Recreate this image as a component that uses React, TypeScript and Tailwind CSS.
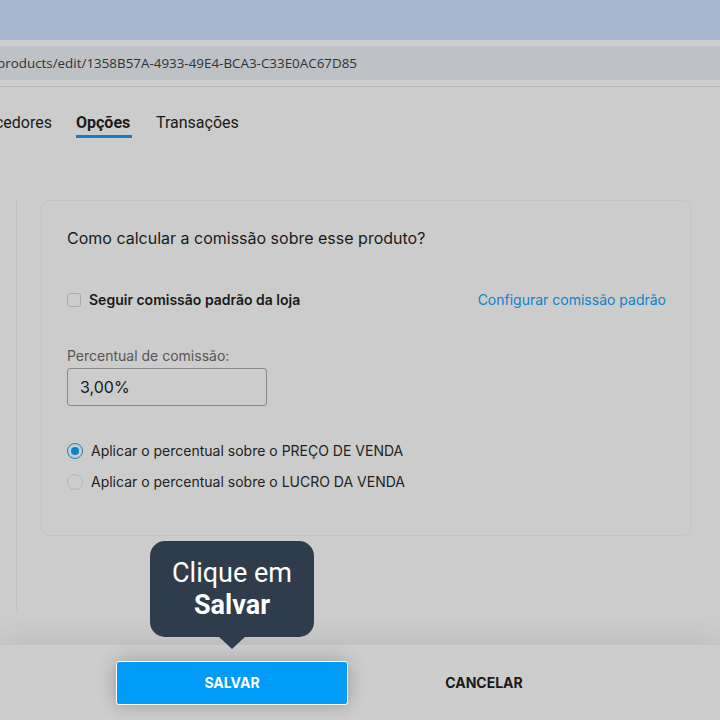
const FONT = { fontFamily: "Inter, 'Noto Sans', sans-serif" }

export default function App() {
  return (
    <div className="relative flex h-[720px] w-[720px] flex-col overflow-hidden bg-[#cccccc]" style={FONT}>
      {/* Browser chrome */}
      <div className="h-[40px] shrink-0 bg-[#a6b6cc]" />
      <div className="h-[6px] shrink-0 bg-[#cecece]" />
      <div
        className="flex h-[34px] shrink-0 items-center overflow-hidden bg-[#bec1c6] text-[13.4px] text-[#333]"
        style={{ fontFamily: "'Open Sans', 'Noto Sans', sans-serif" }}
      >
        <span className="-ml-[3px] whitespace-nowrap">products/edit/1358B57A-4933-49E4-BCA3-C33E0AC67D85</span>
      </div>
      <div className="h-[6px] shrink-0 bg-[#cecece]" />
      <div className="h-px shrink-0 bg-[#b6b6b6]" />

      {/* Tabs */}
      <div
        className="flex h-[51px] shrink-0 items-end text-[16px] text-[#1a1a1a]"
        style={{ fontFamily: "Roboto, 'Noto Sans', sans-serif" }}
      >
        <div className="flex w-[52px] justify-end overflow-hidden">
          <span className="whitespace-nowrap pb-[3px]">Fornecedores</span>
        </div>
        <div className="ml-[24px] flex flex-col">
          <span className="font-bold">Opções</span>
          <span className="h-[3px] w-[56px] bg-[#0a7fd0]" />
        </div>
        <span className="ml-[24px] pb-[3px]">Transações</span>
      </div>

      {/* Content */}
      <div className="flex flex-1 pt-[62px]">
        <div className="ml-[16px] h-[412px] border-l border-[#c2c2c2]" />
        <div className="ml-[24px] flex h-[336px] w-[651px] flex-col rounded-[9px] border border-[#c3c3c3] px-[25px] pt-[25px]">
          <h2 className="text-[16px] text-[#1a1a1a]">Como calcular a comissão sobre esse produto?</h2>

          <div className="mt-[39px] flex items-center justify-between">
            <label className="flex items-center gap-[8px]">
              <span className="h-[14px] w-[14px] rounded-[3px] border border-[#aaaaaa]" />
              <span className="text-[14px] font-semibold text-[#1a1a1a]">Seguir comissão padrão da loja</span>
            </label>
            <a className="text-[14px] text-[#0a84cc]">Configurar comissão padrão</a>
          </div>

          <span className="mt-[35px] text-[14px] text-[#555]">Percentual de comissão:</span>
          <div className="mt-[2px] flex h-[38px] w-[200px] items-center rounded-[3px] border border-[#888] px-[12px] text-[16px] text-[#1a1a1a]">
            3,00%
          </div>

          <div className="mt-[34px] flex flex-col gap-[10px] text-[14px] text-[#222]">
            <label className="flex items-center gap-[8px]">
              <span className="flex h-[16px] w-[16px] items-center justify-center rounded-full border border-[#0a84cc]">
                <span className="h-[8px] w-[8px] rounded-full bg-[#0a84cc]" />
              </span>
              Aplicar o percentual sobre o PREÇO DE VENDA
            </label>
            <label className="flex items-center gap-[8px]">
              <span className="h-[16px] w-[16px] rounded-full border border-[#b5b5b5]" />
              Aplicar o percentual sobre o LUCRO DA VENDA
            </label>
          </div>
        </div>
      </div>

      {/* Bottom bar */}
      <div className="flex h-[75px] shrink-0 items-center bg-[#cdcdcd] pl-[116px] shadow-[0_-10px_24px_rgba(0,0,0,0.07)]">
        <button className="h-[44px] w-[232px] rounded-[3px] border border-white bg-[#009cf7] text-[14px] font-bold text-white shadow-[0_0_18px_rgba(0,0,0,0.25)]">
          SALVAR
        </button>
        <span className="w-[272px] text-center text-[14px] font-bold text-[#1a1a1a]">CANCELAR</span>
      </div>

      {/* Tooltip */}
      <div
        className="absolute left-[150px] top-[541px] flex h-[96px] w-[164px] flex-col items-center justify-center rounded-[15px] bg-[#2e3c4b] text-[27px] leading-[32px] text-white"
        style={{ fontFamily: "Roboto, 'Noto Sans', sans-serif" }}
      >
        <span>Clique em</span>
        <span className="font-bold">Salvar</span>
        <span className="absolute -bottom-[12px] left-[68px] h-0 w-0 border-l-[14px] border-r-[14px] border-t-[13px] border-l-transparent border-r-transparent border-t-[#2e3c4b]" />
      </div>
    </div>
  )
}
